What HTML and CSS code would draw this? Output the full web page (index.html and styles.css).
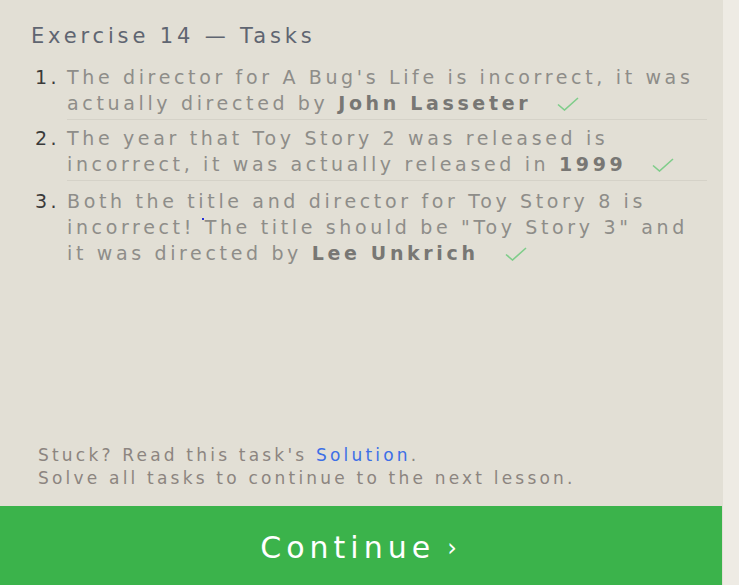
FILE: index.html
```html
<!DOCTYPE html>
<html>
<head>
<meta charset="utf-8">
<link rel="stylesheet" href="styles.css">
</head>
<body>
<div class="panel">
  <div class="content">
    <h2 class="title">Exercise 14 — Tasks</h2>
    <ol class="tasks">
      <li class="task"><span class="num">1.</span><span class="text">The director for A Bug's Life is incorrect, it was<br>actually directed by <b>John Lasseter</b><svg class="check" width="22" height="14" viewBox="0 0 22 14"><path d="M1 7.5 L7.5 13 L21 1" fill="none" stroke="#7fcd8a" stroke-width="1.6"/></svg></span></li>
      <li class="task"><span class="num">2.</span><span class="text">The year that Toy Story 2 was released is<br>incorrect, it was actually released in <b>1999</b><svg class="check" width="22" height="14" viewBox="0 0 22 14"><path d="M1 7.5 L7.5 13 L21 1" fill="none" stroke="#7fcd8a" stroke-width="1.6"/></svg></span></li>
      <li class="task last"><span class="num">3.</span><span class="text">Both the title and director for Toy Story 8 is<br>incorrect!<span class="dot"></span> The title should be "Toy Story 3" and<br>it was directed by <b>Lee Unkrich</b><svg class="check" width="22" height="14" viewBox="0 0 22 14"><path d="M1 7.5 L7.5 13 L21 1" fill="none" stroke="#7fcd8a" stroke-width="1.6"/></svg></span></li>
    </ol>
  </div>
  <div class="footer">
    <p class="note">Stuck? Read this task's <a class="link">Solution</a>.</p>
    <p class="note">Solve all tasks to continue to the next lesson.</p>
  </div>
  <div class="continue">Continue<span class="chev">›</span></div>
</div>
</body>
</html>
```
FILE: styles.css
```css
html, body {
  margin: 0;
  padding: 0;
}
body {
  background: #eeebe4;
  width: 739px;
  height: 585px;
  overflow: hidden;
  font-family: "DejaVu Sans", sans-serif;
}
.panel {
  width: 723px;
  height: 585px;
  background: #e2dfd5;
  display: flex;
  flex-direction: column;
}
.content {
  padding: 22px 16px 0 31px;
  flex: 1;
}
.title {
  margin: 0 0 9px 0;
  font-size: 21px;
  font-weight: normal;
  color: #5f6571;
  letter-spacing: 3.85px;
  line-height: 28px;
  white-space: nowrap;
}
.tasks {
  list-style: none;
  margin: 0;
  padding: 0;
}
.task {
  display: flex;
  border-bottom: 1px solid #d5d2c8;
  padding: 5px 0 3px 0;
  margin-left: 36px;
  position: relative;
}
.task.last {
  border-bottom: none;
  padding-top: 7px;
}
.num {
  position: absolute;
  left: -32px;
  top: 5px;
  color: #3a3a3a;
  font-size: 19px;
  line-height: 26px;
  letter-spacing: 3.5px;
}
.task.last .num {
  top: 7px;
}
.text {
  color: #8e8d89;
  font-size: 19px;
  line-height: 26px;
  letter-spacing: 3.65px;
  position: relative;
  white-space: nowrap;
}
.text b {
  color: #787774;
}
.check {
  margin-left: 26px;
  vertical-align: -1px;
}
.dot {
  position: absolute;
  width: 2px;
  height: 2px;
  background: #2630d8;
  left: 135px;
  top: 30px;
}
.footer {
  padding: 0 0 16px 38px;
}
.note {
  margin: 0;
  font-size: 17px;
  line-height: 23px;
  color: #8c8580;
  letter-spacing: 3.2px;
  white-space: nowrap;
}
.link {
  color: #3d6fe6;
}
.continue {
  height: 79px;
  width: 722px;
  box-sizing: border-box;
  padding-top: 4px;
  background: #3bb34b;
  color: #ffffff;
  font-size: 30px;
  letter-spacing: 5px;
  display: flex;
  align-items: center;
  justify-content: center;
}
.chev {
  font-size: 24px;
  margin-left: 12px;
}
```
